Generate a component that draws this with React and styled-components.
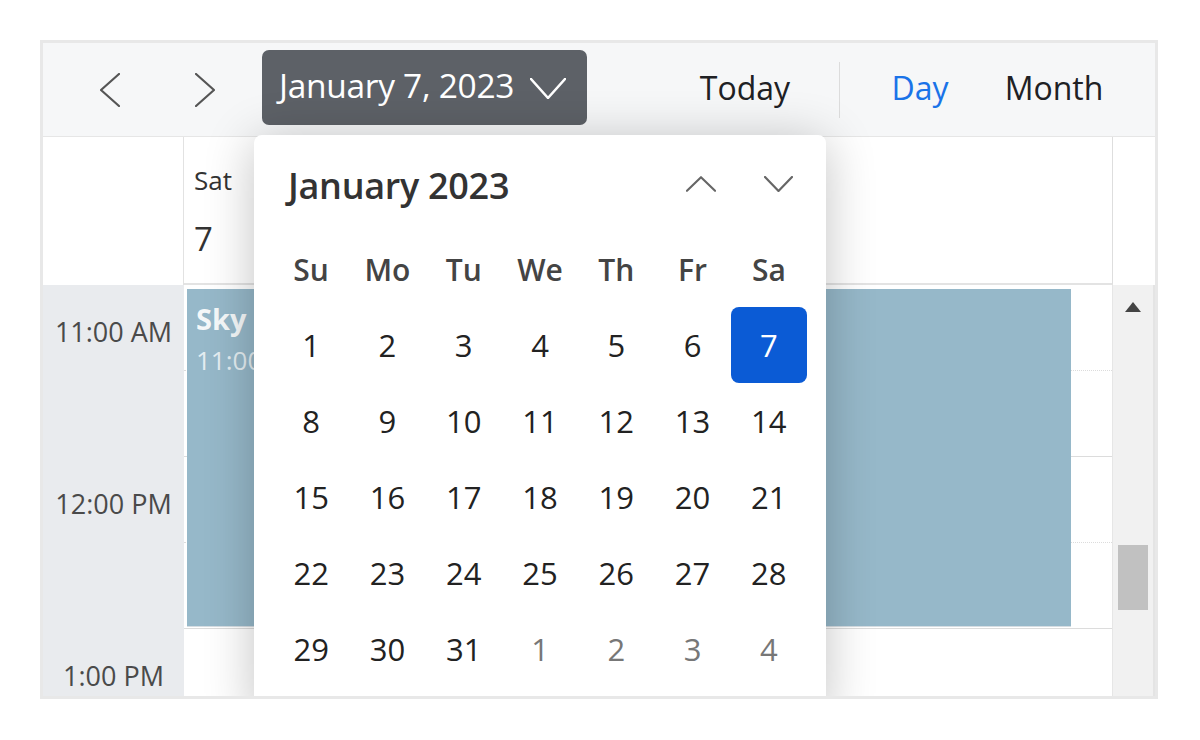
import React from 'react';
import styled, { createGlobalStyle } from 'styled-components';

const GlobalStyle = createGlobalStyle`
  body {
    margin: 0;
    background: #ffffff;
    font-family: "Open Sans", "Noto Sans", Arial, sans-serif;
  }
`;

/** Outer scheduler frame */
const Frame = styled.div`
  position: relative;
  margin: 40px 0 0 40px;
  width: 1118px;
  height: 659px;
  box-sizing: border-box;
  border: 3px solid #e8e8e8;
  display: flex;
  flex-direction: column;
  overflow: hidden;
  background: #fff;
`;

/** Top toolbar */
const Toolbar = styled.div`
  flex: none;
  height: 94px;
  box-sizing: border-box;
  display: flex;
  align-items: center;
  padding: 0 41px 4px 37px;
  background: #f6f7f8;
  border-bottom: 1px solid #e6e6e6;
`;

const NavButton = styled.button`
  width: 60px;
  height: 60px;
  margin-left: ${({ $gap }) => $gap || 0}px;
  margin-top: 4px;
  display: flex;
  align-items: center;
  justify-content: center;
  background: none;
  border: none;
  padding: 0;
`;

const DateButton = styled.button`
  margin-left: 27px;
  width: 325px;
  height: 75px;
  box-sizing: border-box;
  display: flex;
  align-items: center;
  justify-content: space-between;
  padding: 0 21px 5px 17px;
  border: none;
  border-radius: 7px;
  background: #5d6167;
  color: #fff;
  font-family: inherit;
  font-size: 33.5px;
  letter-spacing: -0.3px;

  svg {
    margin-top: 6px;
  }
`;

const RightGroup = styled.div`
  margin-left: auto;
  display: flex;
  align-items: center;
`;

const ViewButton = styled.button`
  width: 120px;
  margin-left: ${({ $gap }) => $gap || 0}px;
  background: none;
  border: none;
  padding: 0;
  font-family: inherit;
  font-size: 32px;
  color: ${({ $active }) => ($active ? '#1a73e8' : '#202124')};
`;

const Separator = styled.div`
  width: 1px;
  height: 56px;
  margin-left: 34px;
  margin-top: 4px;
  background: #dcdcdc;
`;

/** Main scheduler grid */
const Grid = styled.div`
  flex: 1;
  display: grid;
  grid-template-columns: 141px 1fr 42px;
  grid-template-rows: 148px 1fr;
  min-height: 0;
`;

const CornerCell = styled.div`
  background: #fff;
  border-right: 1px solid #e2e2e2;
`;

const DayHeader = styled.div`
  background: #fff;
  border-bottom: 2px solid #e3e3e3;
  border-right: 1px solid #dedede;
  padding: 24px 0 0 10px;
  color: #333;
`;

const DayName = styled.div`
  font-size: 26px;
  line-height: 38px;
`;

const DayNumber = styled.div`
  margin-top: 18px;
  font-size: 33px;
  line-height: 44px;
`;

const ScrollHeader = styled.div`
  background: #fff;
`;

const TimeColumn = styled.div`
  background: #e9ebee;
  overflow: hidden;
`;

const TimeSlot = styled.div`
  height: 172px;
  box-sizing: border-box;
  padding-top: 28px;
  text-align: center;
  font-size: 27px;
  line-height: 38px;
  color: #4a4a4a;
`;

const DayBody = styled.div`
  position: relative;
  overflow: hidden;
  background: #fff;
  border-right: 1px solid #e6e6e6;
`;

const Slot = styled.div`
  height: 86px;
  box-sizing: border-box;
  border-bottom: 1px ${({ $half }) => ($half ? 'dotted' : 'solid')} #dcdcdc;
`;

const Event = styled.div`
  position: absolute;
  top: 4px;
  left: 3px;
  right: 41px;
  height: 338px;
  box-sizing: border-box;
  padding: 11px 9px;
  background: #96b8c9;
  border-bottom: 1px solid #d5dde2;
`;

const EventTitle = styled.div`
  font-size: 29px;
  font-weight: 700;
  line-height: 38px;
  color: rgba(255, 255, 255, 0.92);
`;

const EventTime = styled.div`
  margin-top: 4px;
  font-size: 26px;
  line-height: 36px;
  color: rgba(255, 255, 255, 0.75);
`;

const ScrollTrack = styled.div`
  background: #f1f1f1;
  border-right: 2px solid #e4e4e4;
  display: flex;
  flex-direction: column;
  align-items: center;
`;

const ScrollArrow = styled.div`
  margin-top: 17px;
  width: 0;
  height: 0;
  border-left: 8px solid transparent;
  border-right: 8px solid transparent;
  border-bottom: 10px solid #444;
`;

const ScrollThumb = styled.div`
  margin-top: 233px;
  width: 30px;
  height: 65px;
  background: #c1c1c1;
`;

/** Date picker popup */
const Popup = styled.div`
  position: absolute;
  left: 211px;
  top: 92px;
  width: 572px;
  height: 580px;
  box-sizing: border-box;
  padding: 0 19px;
  background: #fff;
  border-radius: 8px 8px 0 0;
  box-shadow: 0 6px 50px rgba(0, 0, 0, 0.24);
`;

const PopupHeader = styled.div`
  height: 96px;
  display: flex;
  align-items: center;
  padding: 4px 14px 0 15px;
  box-sizing: border-box;
`;

const PopupTitle = styled.div`
  flex: 1;
  font-size: 36px;
  font-weight: 600;
  color: #333;
  letter-spacing: -0.3px;
`;

const ArrowButton = styled.button`
  width: 30px;
  height: 30px;
  margin-left: ${({ $gap }) => $gap || 0}px;
  margin-top: -2px;
  padding: 0;
  display: flex;
  align-items: center;
  justify-content: center;
  background: none;
  border: none;
`;

const WeekRow = styled.div`
  display: grid;
  grid-template-columns: repeat(7, 1fr);
  height: 76px;
  align-items: center;
  justify-items: center;
  font-size: 30px;
  font-weight: 600;
  color: #444;
`;

const DaysGrid = styled.div`
  display: grid;
  grid-template-columns: repeat(7, 1fr);
  grid-auto-rows: 76px;
`;

const DateCell = styled.div`
  display: flex;
  align-items: center;
  justify-content: center;
  font-size: 31px;
  border-radius: 8px;
  color: ${({ $selected, $muted }) => ($selected ? '#fff' : $muted ? '#777' : '#222')};
  background: ${({ $selected }) => ($selected ? '#0b5bd5' : 'transparent')};
`;

const Chevron = ({ dir, color = '#555', w = 20, h = 34, sw = 2.2 }) => {
  const pts = {
    left: `${w - 1},1 1,${h / 2} ${w - 1},${h - 1}`,
    right: `1,1 ${w - 1},${h / 2} 1,${h - 1}`,
    up: `1,${h - 1} ${w / 2},1 ${w - 1},${h - 1}`,
    down: `1,1 ${w / 2},${h - 1} ${w - 1},1`,
  }[dir];
  return (
    <svg width={w} height={h} viewBox={`0 0 ${w} ${h}`}>
      <polyline points={pts} fill="none" stroke={color} strokeWidth={sw} strokeLinecap="round" strokeLinejoin="round" />
    </svg>
  );
};

const weekDays = ['Su', 'Mo', 'Tu', 'We', 'Th', 'Fr', 'Sa'];
const dates = [
  ...Array.from({ length: 31 }, (_, i) => ({ d: i + 1 })),
  ...[1, 2, 3, 4].map((d) => ({ d, muted: true })),
];

export default function App() {
  return (
    <>
      <GlobalStyle />
      <Frame>
        <Toolbar>
          <NavButton>
            <Chevron dir="left" />
          </NavButton>
          <NavButton $gap={35}>
            <Chevron dir="right" />
          </NavButton>
          <DateButton>
            <span>January 7, 2023</span>
            <Chevron dir="down" color="#fff" w={36} h={21} sw={2.6} />
          </DateButton>
          <RightGroup>
            <ViewButton>Today</ViewButton>
            <Separator />
            <ViewButton $gap={20} $active>Day</ViewButton>
            <ViewButton $gap={14}>Month</ViewButton>
          </RightGroup>
        </Toolbar>

        <Grid>
          <CornerCell />
          <DayHeader>
            <DayName>Sat</DayName>
            <DayNumber>7</DayNumber>
          </DayHeader>
          <ScrollHeader />

          <TimeColumn>
            <TimeSlot>11:00 AM</TimeSlot>
            <TimeSlot>12:00 PM</TimeSlot>
            <TimeSlot>1:00 PM</TimeSlot>
          </TimeColumn>
          <DayBody>
            <Slot $half />
            <Slot />
            <Slot $half />
            <Slot />
            <Slot $half />
            <Event>
              <EventTitle>Sky</EventTitle>
              <EventTime>11:00 AM</EventTime>
            </Event>
          </DayBody>
          <ScrollTrack>
            <ScrollArrow />
            <ScrollThumb />
          </ScrollTrack>
        </Grid>

        <Popup>
          <PopupHeader>
            <PopupTitle>January 2023</PopupTitle>
            <ArrowButton>
              <Chevron dir="up" color="#666" w={31} h={16} sw={2.2} />
            </ArrowButton>
            <ArrowButton $gap={47}>
              <Chevron dir="down" color="#666" w={29} h={16} sw={2.2} />
            </ArrowButton>
          </PopupHeader>
          <WeekRow>
            {weekDays.map((w) => (
              <span key={w}>{w}</span>
            ))}
          </WeekRow>
          <DaysGrid>
            {dates.map((x, i) => (
              <DateCell key={i} $muted={x.muted} $selected={!x.muted && x.d === 7}>
                {x.d}
              </DateCell>
            ))}
          </DaysGrid>
        </Popup>
      </Frame>
    </>
  );
}
